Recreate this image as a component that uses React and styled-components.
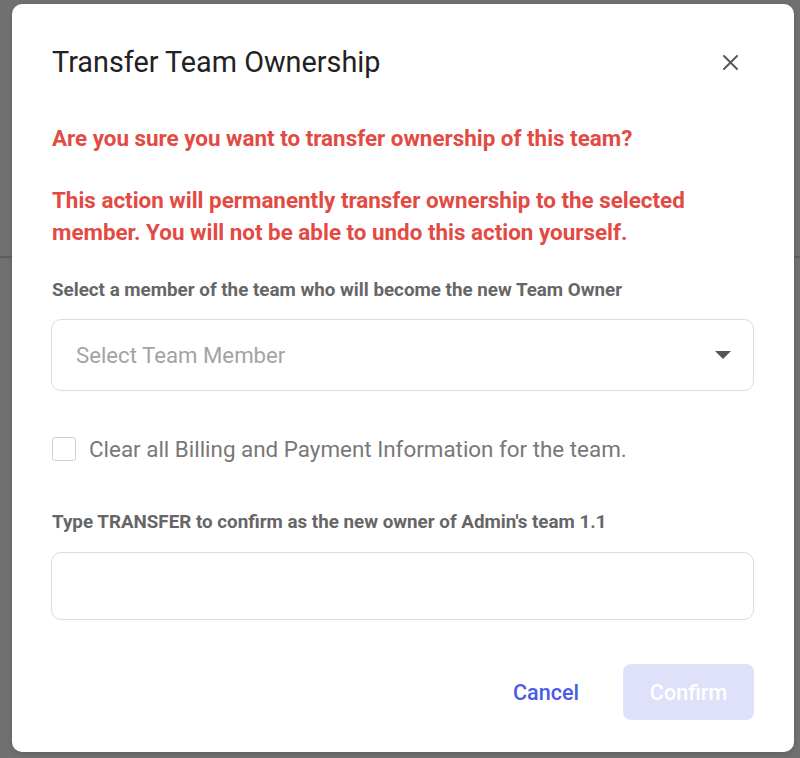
import React from "react";
import styled, { createGlobalStyle } from "styled-components";

const Global = createGlobalStyle`
  html, body { margin: 0; padding: 0; }
  body {
    width: 800px;
    height: 758px;
    overflow: hidden;
    background: linear-gradient(to bottom, #717171 0, #717171 256px, #5e5e5e 256px, #5e5e5e 258px, #717171 258px);
    font-family: Roboto, "Noto Sans", sans-serif;
  }
`;

const Modal = styled.div`
  box-sizing: border-box;
  margin: 4px 6px 0 12px;
  width: 782px;
  height: 748px;
  background: #fff;
  border-radius: 10px;
  padding: 42px 40px 32px 39px;
  display: flex;
  flex-direction: column;
  box-shadow: 0 2px 6px rgba(0,0,0,0.15);
`;

const Header = styled.div`
  display: flex;
  align-items: center;
  justify-content: space-between;
  padding-left: 1px;
`;

const Title = styled.h2`
  margin: 0;
  font-size: 28.8px;
  line-height: 32px;
  font-weight: 400;
  color: #222;
`;

const CloseButton = styled.button`
  border: none;
  background: none;
  padding: 0;
  margin-right: 16px;
  width: 16px;
  height: 16px;
  display: flex;
  align-items: center;
  justify-content: center;
  cursor: pointer;
`;

const Warning = styled.p`
  margin: ${(p) => p.$mt}px 0 0 1px;
  font-size: 22.4px;
  line-height: ${(p) => p.$lh}px;
  font-weight: 700;
  color: #e34a44;
`;

const FieldLabel = styled.div`
  margin: ${(p) => p.$mt}px 0 0 1px;
  font-size: 18.8px;
  line-height: 22px;
  font-weight: 700;
  color: #666;
`;

const SelectBox = styled.div`
  box-sizing: border-box;
  margin-top: 18px;
  height: 72px;
  border: 1px solid #dcdcdc;
  border-radius: 10px;
  display: flex;
  align-items: center;
  justify-content: space-between;
  padding: 0 22px 0 24px;
`;

const Placeholder = styled.span`
  font-size: 22.2px;
  color: #a3a3a3;
`;

const CheckRow = styled.label`
  margin: 46px 0 0 1px;
  display: flex;
  align-items: center;
  gap: 13px;
  height: 24px;
`;

const CheckBox = styled.span`
  box-sizing: border-box;
  width: 24px;
  height: 24px;
  border: 1px solid #cfcfcf;
  border-radius: 3px;
  flex: none;
`;

const CheckText = styled.span`
  font-size: 22.4px;
  color: #787878;
`;

const TextInput = styled.input`
  box-sizing: border-box;
  margin-top: 19px;
  width: 100%;
  height: 68px;
  border: 1px solid #dcdcdc;
  border-radius: 10px;
  outline: none;
  font-size: 22px;
  padding: 0 24px;
  font-family: inherit;
`;

const Footer = styled.div`
  margin-top: 44px;
  display: flex;
  justify-content: flex-end;
  align-items: center;
  gap: 44px;
`;

const TextButton = styled.button`
  border: none;
  background: none;
  padding: 0;
  font-family: inherit;
  font-size: 21.6px;
  font-weight: 500;
  color: #4a5de2;
  cursor: pointer;
`;

const PrimaryButton = styled.button`
  border: none;
  width: 131px;
  height: 56px;
  border-radius: 8px;
  background: #dfe1fb;
  color: #fff;
  font-family: inherit;
  font-size: 21.6px;
  font-weight: 500;
`;

export default function App() {
  return (
    <>
      <Global />
      <Modal>
        <Header>
          <Title>Transfer Team Ownership</Title>
          <CloseButton aria-label="Close">
            <svg width="15" height="15" viewBox="0 0 15 15">
              <path d="M1 1L14 14M14 1L1 14" stroke="#555" strokeWidth="1.9" strokeLinecap="round" />
            </svg>
          </CloseButton>
        </Header>
        <Warning $mt={46} $lh={28}>
          Are you sure you want to transfer ownership of this team?
        </Warning>
        <Warning $mt={32} $lh={32}>
          This action will permanently transfer ownership to the selected member. You will not be able to undo this action yourself.
        </Warning>
        <FieldLabel $mt={31}>Select a member of the team who will become the new Team Owner</FieldLabel>
        <SelectBox>
          <Placeholder>Select Team Member</Placeholder>
          <svg width="16" height="8" viewBox="0 0 16 8">
            <path d="M0 0H16L8 8Z" fill="#555" />
          </svg>
        </SelectBox>
        <CheckRow>
          <CheckBox />
          <CheckText>Clear all Billing and Payment Information for the team.</CheckText>
        </CheckRow>
        <FieldLabel $mt={50}>Type TRANSFER to confirm as the new owner of Admin's team 1.1</FieldLabel>
        <TextInput type="text" />
        <Footer>
          <TextButton>Cancel</TextButton>
          <PrimaryButton disabled>Confirm</PrimaryButton>
        </Footer>
      </Modal>
    </>
  );
}
